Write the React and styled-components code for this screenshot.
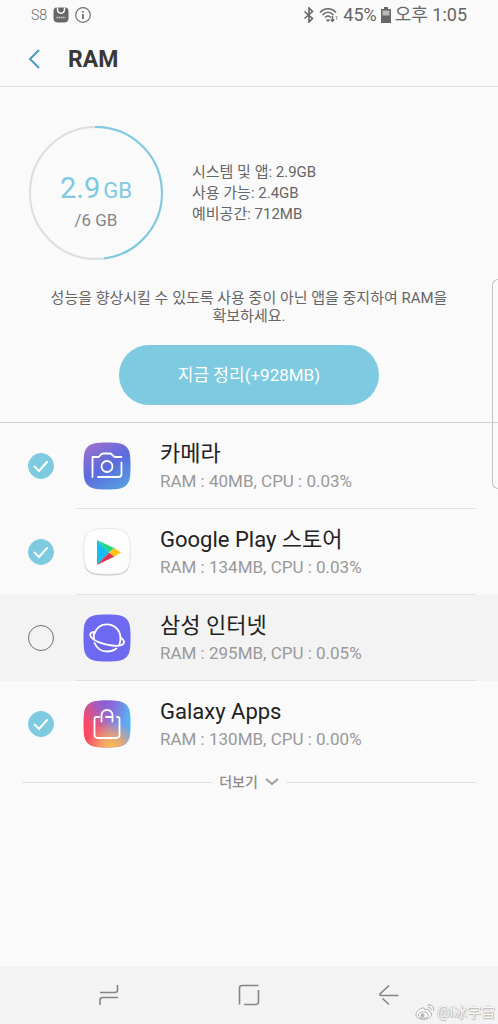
import React, { useState } from "react";
import styled, { createGlobalStyle } from "styled-components";

const GlobalStyle = createGlobalStyle`
  * {
    box-sizing: border-box;
  }
  body {
    margin: 0;
    background-color: #fafafa;
    font-family: Roboto, "Noto Sans CJK KR", sans-serif;
    color: #666;
  }
  button {
    border: none;
    padding: 0;
    background: none;
    font-family: inherit;
    cursor: pointer;
  }
  svg {
    display: block;
  }
`;

const APPS = [
  { id: "camera", name: "카메라", ram: "40MB", cpu: "0.03%", checked: true },
  { id: "play", name: "Google Play 스토어", ram: "134MB", cpu: "0.03%", checked: true },
  { id: "internet", name: "삼성 인터넷", ram: "295MB", cpu: "0.05%", checked: false },
  { id: "galaxy", name: "Galaxy Apps", ram: "130MB", cpu: "0.00%", checked: true },
];

// rounded square shared by all the launcher icons
const SQUIRCLE =
  "M24 .5C36 .5 40.500 1.500 44 5.500C47 9 47.500 14 47.500 24C47.500 34 47 39 44 42.500C40.500 46.500 36 47.500 24 47.500C12 47.500 7.500 46.500 4 42.500C1 39 .5 34 .5 24C.5 14 1 9 4 5.500C7.500 1.500 12 .5 24 .5Z";

function CameraIcon() {
  return (
    <svg width="48" height="48" viewBox="0 0 48 48">
      <defs>
        <linearGradient id="cam" x1="0.2" y1="0" x2="0.8" y2="1">
          <stop offset="0" stopColor="#9a70cf" />
          <stop offset="0.5" stopColor="#5b6bdd" />
          <stop offset="1" stopColor="#569fe2" />
        </linearGradient>
      </defs>
      <path d={SQUIRCLE} fill="url(#cam)" />
      <g fill="none" stroke="#fff" strokeWidth="1.800" strokeLinecap="round" strokeLinejoin="round">
        <path d="M9.500 35V15H15.500C17 15 17.500 11.500 20 11.500H27C29.500 11.500 30 15 32 15H38.500" />
        <path d="M38.500 20.500V32Q38.500 35 35.500 35H15" />
        <circle cx="24" cy="24.500" r="5.500" />
      </g>
    </svg>
  );
}

function PlayIcon() {
  return (
    <svg width="48" height="48" viewBox="0 0 48 48">
      <path d={SQUIRCLE} fill="#c9c9c9" />
      <path d={SQUIRCLE} fill="#fdfdfd" stroke="#ececec" strokeWidth=".8" transform="translate(.4 .2) scale(.984 .965)" />
      <path d="M14 12V37L26 24.500Z" fill="#16bdf2" />
      <path d="M14 12L31.500 20.300L26 24.500Z" fill="#22d784" />
      <path d="M14 37L31.500 28.500L26 24.500Z" fill="#df344e" />
      <path d="M31 20L38 24.500L31 28.800L26.500 24.500Z" fill="#ffc414" />
    </svg>
  );
}

function InternetIcon() {
  return (
    <svg width="48" height="48" viewBox="0 0 48 48">
      <path d={SQUIRCLE} fill="#6d69f0" />
      <g fill="none" stroke="#fff" strokeWidth="1.800" strokeLinecap="round" strokeLinejoin="round">
        <path d="M11.500 19.500C13.500 13.500 18 10.300 24 10.300C31.500 10.300 37 16 37.500 23.500C37.700 27 37 29 36 31.500" />
        <path d="M11.500 29C14 34.500 18.500 37.500 24 37.500C28 37.500 31 36.300 33.500 34.500" />
        <path d="M11.500 18C7.500 18 6 20.500 8 23C11 27 20 30.500 29 31.500C37 32.500 41.500 31 41 27.500C40.700 25.800 39.500 24.800 37.500 23.500" />
        <path d="M11.500 18C10.500 20 10.500 22 11 24.500" />
      </g>
    </svg>
  );
}

function GalaxyIcon() {
  return (
    <svg width="48" height="48" viewBox="0 0 48 48">
      <defs>
        <linearGradient id="gxBase" x1="0" y1="0.600" x2="1" y2="0.400">
          <stop offset="0" stopColor="#ff4560" />
          <stop offset="0.3" stopColor="#ee5578" />
          <stop offset="0.6" stopColor="#8c83dc" />
          <stop offset="1" stopColor="#4fb9f7" />
        </linearGradient>
        <radialGradient id="gxTop" cx="0.45" cy="0" r="0.6">
          <stop offset="0" stopColor="#8a5bd8" />
          <stop offset="1" stopColor="#8a5bd8" stopOpacity="0" />
        </radialGradient>
        <radialGradient id="gxBottom" cx="0.6" cy="1" r="0.550">
          <stop offset="0" stopColor="#fabf52" />
          <stop offset="0.4" stopColor="#f6ae62" stopOpacity="0.85" />
          <stop offset="1" stopColor="#f2a767" stopOpacity="0" />
        </radialGradient>
      </defs>
      <path d={SQUIRCLE} fill="url(#gxBase)" />
      <path d={SQUIRCLE} fill="url(#gxTop)" />
      <path d={SQUIRCLE} fill="url(#gxBottom)" />
      <g fill="none" stroke="#fff" strokeWidth="1.800" strokeLinecap="round" strokeLinejoin="round">
        <path d="M16 17H13.500Q11.500 17 11.500 19V34.500Q11.500 38 15 38H33Q36.500 38 36.500 34.500V19Q36.500 17 34.500 17H34" />
        <path d="M18.500 21.500V15.500C18.500 12 21 10 24 10S29.500 12 29.500 15.500V21.500M23 17H29.500" />
      </g>
    </svg>
  );
}

const ICONS = {
  camera: CameraIcon,
  play: PlayIcon,
  internet: InternetIcon,
  galaxy: GalaxyIcon,
};

function StatusIcons() {
  return (
    <>
      <svg width="16" height="16" viewBox="0 0 16 16">
        <path d="M3 .5H13Q15.500 1 15.500 4V11Q15.500 15.500 11 15.500H5Q.5 15.500 .5 11V4Q.5 1 3 .5Z" fill="#666" />
        <path d="M4.500 .5V2C4.500 7.500 11.500 7.500 11.500 2V.5" fill="none" stroke="#fafafa" strokeWidth="1.500" />
        <path d="M3.500 10.500H12.500" stroke="#ccc" strokeWidth="1.300" strokeDasharray="1.500 .5" />
      </svg>
      <svg width="16" height="16" viewBox="0 0 16 16" fill="none" stroke="#6e6e6e">
        <circle cx="8" cy="8" r="7.300" strokeWidth="1.200" />
        <path d="M8 7V12M8 4V5.600" strokeWidth="1.800" />
      </svg>
    </>
  );
}

function SignalIcons() {
  return (
    <>
      <svg width="12" height="16" viewBox="0 0 12 16" fill="none" stroke="#666" strokeWidth="1.600">
        <path d="M1.500 4.500L9.500 11.500L6 15V1L9.500 4.500L1.500 11.500" />
      </svg>
      <svg width="20" height="16" viewBox="0 0 20 16" fill="none" stroke="#666" strokeWidth="1.400">
        <path d="M1 5.500C5.500 .5 12.500 .5 17 5.500M3.500 8C7 4.200 11 4.200 14.500 8M6 10.500C8 8.500 10 8.500 12 10.500" />
        <path d="M7.500 12.500L9 14L10.500 12.500" />
        <path d="M13.500 9V14M11.800 12.500L13.500 14.300L15.200 12.500" />
        <path d="M17.500 13V9M16 10.500L17.500 9L19 10.500" stroke="#aaa" strokeWidth="1" />
      </svg>
    </>
  );
}

function App() {
  const [selected, setSelected] = useState(
    APPS.filter((a) => a.checked).map((a) => a.id)
  );

  const toggle = (id) => {
    setSelected((list) =>
      list.includes(id) ? list.filter((x) => x !== id) : [...list, id]
    );
  };

  return (
    <Page>
      <GlobalStyle />
      <StatusBar>
        <StatusGroup $gap={6}>
          <Carrier>S8</Carrier>
          <StatusIcons />
        </StatusGroup>
        <StatusGroup $gap={4}>
          <SignalIcons />
          <span>45%</span>
          <svg width="10" height="16" viewBox="0 0 10 16">
            <path d="M3 0H7V2H10V16H0V2H3Z" fill="#666" />
            <path d="M1.500 3.500H8.500V8.500H1.500Z" fill="#bbb" />
          </svg>
          <span>오후 1:05</span>
        </StatusGroup>
      </StatusBar>

      <Header>
        <BackButton aria-label="뒤로">
          <svg width="12" height="20" viewBox="0 0 12 20" fill="none" stroke="#4a9cc0" strokeWidth="2">
            <path d="M11 1L2 10L11 19" />
          </svg>
        </BackButton>
        <Title>RAM</Title>
      </Header>

      <Summary>
        <Usage>
          <Ring>
            <svg width="134" height="134" viewBox="0 0 134 134" fill="none" strokeWidth="2">
              <circle cx="67" cy="67" r="66" stroke="#dedede" />
              <path d="M66 1A66 66 0 0 1 75 132.500" stroke="#7dcae1" />
            </svg>
            <RingText>
              <Used>
                2.9<Unit>GB</Unit>
              </Used>
              <Total>/6 GB</Total>
            </RingText>
          </Ring>
          <Details>
            <li>시스템 및 앱: 2.9GB</li>
            <li>사용 가능: 2.4GB</li>
            <li>예비공간: 712MB</li>
          </Details>
        </Usage>
        <Description>
          성능을 향상시킬 수 있도록 사용 중이 아닌 앱을 중지하여 RAM을 확보하세요.
        </Description>
        <CleanButton>지금 정리(+928MB)</CleanButton>
      </Summary>

      <List>
        {APPS.map((app) => {
          const Icon = ICONS[app.id];
          const checked = selected.includes(app.id);
          return (
            <Row key={app.id} $active={!checked}>
              <CheckWrap>
                <Check
                  id={app.id}
                  type="checkbox"
                  checked={checked}
                  onChange={() => toggle(app.id)}
                />
                {checked && (
                  <CheckMark width="26" height="26" viewBox="0 0 26 26">
                    <path d="M6.500 13.500L11 18L19 9" />
                  </CheckMark>
                )}
              </CheckWrap>
              <RowBody htmlFor={app.id}>
                <Icon />
                <AppText>
                  <AppName>{app.name}</AppName>
                  <AppInfo>
                    RAM : {app.ram}, CPU : {app.cpu}
                  </AppInfo>
                </AppText>
              </RowBody>
            </Row>
          );
        })}
      </List>

      <More>
        더보기
        <svg width="14" height="8" viewBox="0 0 14 8" fill="none" stroke="#999" strokeWidth="1.800">
          <path d="M1 1L7 6L13 1" />
        </svg>
      </More>

      <EdgeHandle />

      <NavBar>
        <NavButton aria-label="최근 앱">
          <svg width="22" height="22" viewBox="0 0 22 22">
            <path d="M2 8.500H17Q19.500 8.500 19.500 6V1M20 13.500H5Q2 13.500 2 16V21" />
          </svg>
        </NavButton>
        <NavButton aria-label="홈">
          <svg width="22" height="22" viewBox="0 0 22 22">
            <path d="M1.500 20.500V4Q1.500 1.500 4 1.500H20.500M20.500 6V17.500Q20.500 20.500 17.500 20.500H6" />
          </svg>
        </NavButton>
        <NavButton aria-label="뒤로 가기">
          <svg width="22" height="22" viewBox="0 0 22 22">
            <path d="M11 1.500L2 10Q1.500 11.500 3 11.500H20.500M4.500 14.500L11 20.500" />
          </svg>
        </NavButton>
        <Watermark>
          <svg width="20" height="16" viewBox="0 0 20 16" fill="#fff" stroke="#aaa" strokeWidth="1">
            <path d="M8 4C4.500 4 1 8 1 10.800C1 13.500 4.500 15.300 8.500 15.300C13.500 15.300 16.500 12.500 16.500 10C16.500 8.300 15 7.700 14 7.500C14.500 5.500 13 4.800 10 6C10.300 4.700 9.500 4 8 4Z" />
            <ellipse cx="8.300" cy="11" rx="5" ry="3.200" />
            <circle cx="7.500" cy="11.300" r="1.500" fill="#bbb" />
            <path d="M12.500 1.200C16.500 .2 19.500 3 18.500 7M13 3.500C15 3.200 16.500 4.500 16 6.300" fill="none" />
          </svg>
          @i冰宇宙
        </Watermark>
      </NavBar>
    </Page>
  );
}

const Page = styled.div`
  position: relative;
  display: flex;
  flex-direction: column;
  min-height: 100vh;
`;

const StatusBar = styled.div`
  display: flex;
  align-items: center;
  justify-content: space-between;
  height: 30px;
  padding: 0 31px;
  font-size: 18px;
  line-height: 24px;
`;

const StatusGroup = styled.div`
  display: flex;
  align-items: center;
  gap: ${(props) => props.$gap}px;
`;

const Carrier = styled.span`
  font-size: 14px;
  font-weight: 300;
`;

const Header = styled.header`
  display: flex;
  align-items: center;
  gap: 28px;
  height: 57px;
  padding: 2px 28px 0;
  border-bottom: 1px solid #e0e0e0;
`;

const BackButton = styled.button`
  display: flex;
`;

const Title = styled.h1`
  margin: 0;
  padding-top: 2px;
  font-size: 23px;
  line-height: 28px;
  font-weight: 700;
  color: #383838;
`;

const Summary = styled.section`
  display: flex;
  flex-direction: column;
  align-items: center;
  padding: 39px 29px 17px;
  border-bottom: 1px solid #d2d2d2;
`;

const Usage = styled.div`
  display: flex;
  align-items: center;
  align-self: stretch;
  gap: 29px;
`;

const Ring = styled.div`
  display: grid;
  place-items: center;
  > * {
    grid-area: 1 / 1;
  }
`;

const RingText = styled.div`
  display: flex;
  flex-direction: column;
  align-items: center;
  padding-top: 18px;
`;

const Used = styled.div`
  display: flex;
  align-items: baseline;
  gap: 3px;
  font-size: 29px;
  line-height: 32px;
  color: #7dcae1;
`;

const Unit = styled.span`
  font-size: 22px;
`;

const Total = styled.div`
  font-size: 17px;
  line-height: 26px;
  color: #858585;
`;

const Details = styled.ul`
  margin: 0;
  padding: 0;
  list-style: none;
  font-size: 15px;
  line-height: 21px;
`;

const Description = styled.p`
  margin: 29px 0 20px;
  padding: 0 16px;
  font-size: 15px;
  line-height: 18px;
  text-align: center;
  word-break: keep-all;
`;

const CleanButton = styled.button`
  width: 260px;
  height: 60px;
  border-radius: 30px;
  background-color: #7dcae1;
  color: #fff;
  font-size: 17px;
  line-height: 24px;
`;

const List = styled.ul`
  margin: 0;
  padding: 0;
  list-style: none;
`;

const Row = styled.li`
  display: flex;
  align-items: center;
  gap: 22px;
  padding: 0 22px 0 28px;
  background-color: ${(props) => (props.$active ? "#f3f3f3" : "transparent")};
  &:last-child label {
    border-bottom: none;
  }
`;

const CheckWrap = styled.div`
  display: grid;
  > * {
    grid-area: 1 / 1;
  }
`;

const Check = styled.input`
  appearance: none;
  width: 26px;
  height: 26px;
  margin: 0;
  border: 1px solid #707070;
  border-radius: 50%;
  cursor: pointer;
  &:checked {
    border-color: #7dcae1;
    background-color: #7dcae1;
  }
`;

const CheckMark = styled.svg`
  fill: none;
  stroke: #fff;
  stroke-width: 2;
  stroke-linecap: round;
  pointer-events: none;
`;

const RowBody = styled.label`
  display: flex;
  flex: 1;
  align-items: center;
  gap: 29px;
  height: 86px;
  padding-left: 7px;
  border-bottom: 1px solid #e2e2e2;
  cursor: pointer;
`;

const AppText = styled.div`
  display: flex;
  flex-direction: column;
`;

const AppName = styled.span`
  font-size: 22px;
  line-height: 30px;
  color: #222;
`;

const AppInfo = styled.span`
  font-size: 17px;
  line-height: 24px;
  color: #999;
`;

const More = styled.button`
  display: flex;
  align-items: center;
  gap: 7px;
  margin: 4px 22px 0;
  font-size: 14px;
  line-height: 22px;
  font-weight: 500;
  color: #8c8c8c;
  &::before,
  &::after {
    content: "";
    flex: 1;
    height: 1px;
    background-color: #e0e0e0;
  }
`;

// edge panel outline, floats over the page on the right side
const EdgeHandle = styled.div`
  position: absolute;
  top: 279px;
  right: 0;
  width: 6px;
  height: 210px;
  border: 1px solid #c4c4c4;
  border-right: none;
  border-radius: 6px 0 0 6px;
`;

const NavBar = styled.nav`
  position: relative;
  display: grid;
  grid-template-columns: repeat(3, 140px);
  justify-content: center;
  height: 58px;
  margin-top: auto;
  background-color: #f3f3f3;
`;

const NavButton = styled.button`
  display: grid;
  place-items: center;
  svg {
    fill: none;
    stroke: #858585;
    stroke-width: 1.6;
  }
`;

const Watermark = styled.div`
  position: absolute;
  right: 3px;
  bottom: 2px;
  display: flex;
  align-items: center;
  gap: 2px;
  font-family: Roboto, "Noto Sans CJK SC", sans-serif;
  font-size: 14px;
  line-height: 20px;
  color: #f8f8f8;
  text-shadow: 0 0 1px #999, 1px 1px 1px #bbb;
`;

export default App;
